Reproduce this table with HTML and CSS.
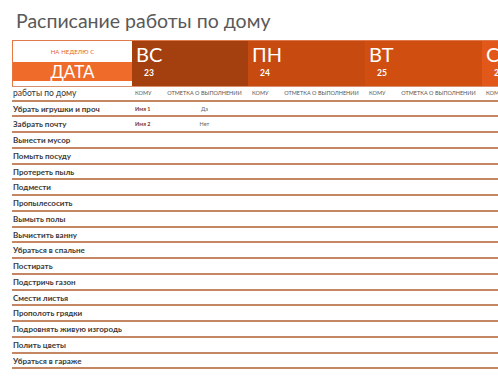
FILE: index.html
```html
<!DOCTYPE html>
<html lang="ru">
<head>
<meta charset="utf-8">
<link rel="stylesheet" href="styles.css">
</head>
<body>
<div class="page">
  <h1 class="title">Расписание работы по дому</h1>
  <div class="sheet">
    <div class="head">
      <div class="week">
        <div class="week-label">НА НЕДЕЛЮ С</div>
        <div class="week-date">ДАТА</div>
      </div>
      <div class="day d1"><div class="day-name">ВС</div><div class="day-num">23</div></div>
      <div class="day d2"><div class="day-name">ПН</div><div class="day-num">24</div></div>
      <div class="day d3"><div class="day-name">ВТ</div><div class="day-num">25</div></div>
      <div class="day d4"><div class="day-name">СР</div><div class="day-num">26</div></div>
    </div>
    <div class="row sub">
      <div class="c-task">работы по дому</div>
      <div class="c-who">КОМУ</div><div class="c-done">ОТМЕТКА О ВЫПОЛНЕНИИ</div>
      <div class="c-who">КОМУ</div><div class="c-done">ОТМЕТКА О ВЫПОЛНЕНИИ</div>
      <div class="c-who">КОМУ</div><div class="c-done">ОТМЕТКА О ВЫПОЛНЕНИИ</div>
      <div class="c-who">КОМУ</div><div class="c-done">ОТМЕТКА О ВЫПОЛНЕНИИ</div>
    </div>
    <div class="row"><div class="c-task">Убрать игрушки и проч</div><div class="c-who name">Имя 1</div><div class="c-done val">Да</div></div>
    <div class="row"><div class="c-task">Забрать почту</div><div class="c-who name">Имя 2</div><div class="c-done val">Нет</div></div>
    <div class="row"><div class="c-task">Вынести мусор</div></div>
    <div class="row"><div class="c-task">Помыть посуду</div></div>
    <div class="row"><div class="c-task">Протереть пыль</div></div>
    <div class="row"><div class="c-task">Подмести</div></div>
    <div class="row"><div class="c-task">Пропылесосить</div></div>
    <div class="row"><div class="c-task">Вымыть полы</div></div>
    <div class="row"><div class="c-task">Вычистить ванну</div></div>
    <div class="row"><div class="c-task">Убраться в спальне</div></div>
    <div class="row"><div class="c-task">Постирать</div></div>
    <div class="row"><div class="c-task">Подстричь газон</div></div>
    <div class="row"><div class="c-task">Смести листья</div></div>
    <div class="row"><div class="c-task">Прополоть грядки</div></div>
    <div class="row"><div class="c-task">Подровнять живую изгородь</div></div>
    <div class="row"><div class="c-task">Полить цветы</div></div>
    <div class="row"><div class="c-task">Убраться в гараже</div></div>
  </div>
</div>
</body>
</html>
```
FILE: styles.css
```css
html, body {
  margin: 0;
  padding: 0;
  background: #ffffff;
  overflow: hidden;
}
body {
  font-family: "Lato", "Open Sans", sans-serif;
  width: 498px;
  height: 382px;
}
.page {
  width: 498px;
  overflow: hidden;
}
.title {
  margin: 0;
  padding: 9px 0 7px 16px;
  height: 24px;
  line-height: 24px;
  font-size: 19.5px;
  font-weight: 400;
  color: #595959;
  white-space: nowrap;
}
.sheet {
  margin-left: 12px;
  width: 620px;
}
.head {
  display: flex;
  height: 45px;
  border-top: 1px solid #e07a4a;
  border-bottom: 1px solid #d9906c;
}
.week {
  width: 119px;
  border-left: 1px solid #e5773f;
  background: #fff;
  display: flex;
  flex-direction: column;
}
.week-label {
  height: 21px;
  display: flex;
  align-items: center;
  justify-content: center;
  font-size: 6px;
  color: #e2612a;
  letter-spacing: 0.1px;
}
.week-date {
  height: 19px;
  background: #ef6b2a;
  color: #fff;
  font-size: 17px;
  line-height: 19px;
  text-align: center;
}
.day {
  width: 117px;
  color: #fff;
  padding-left: 4px;
  box-sizing: border-box;
}
.d1 { width: 116px; background: #a4400f; }
.d2 { background: #c74b10; }
.d3 { background: #d04f10; }
.d4 { background: #e2581a; }
.day-name {
  font-size: 20px;
  line-height: 24px;
  margin-top: 1px;
}
.day-num {
  font-size: 8.5px;
  font-weight: 700;
  padding-left: 8px;
  margin-top: 2px;
}
.row {
  display: flex;
  align-items: center;
  height: 13.75px;
  border-bottom: 2px solid #c58664;
}
.row.sub {
  height: 12.7px;
}
.c-task {
  width: 119px;
  padding-left: 1px;
  font-size: 8px;
  font-weight: 700;
  color: #3a3a3a;
  white-space: nowrap;
  overflow: hidden;
}
.sub .c-task {
  font-size: 8.5px;
  font-weight: 400;
  color: #333;
}
.c-who {
  width: 25px;
  padding-left: 3px;
  font-size: 5.5px;
  color: #555;
  white-space: nowrap;
}
.c-done {
  width: 89px;
  text-align: center;
  font-size: 5.5px;
  color: #555;
  white-space: nowrap;
}
.c-who.name {
  font-weight: 700;
  color: #8a3510;
}
.c-done.val {
  color: #666;
}
```
